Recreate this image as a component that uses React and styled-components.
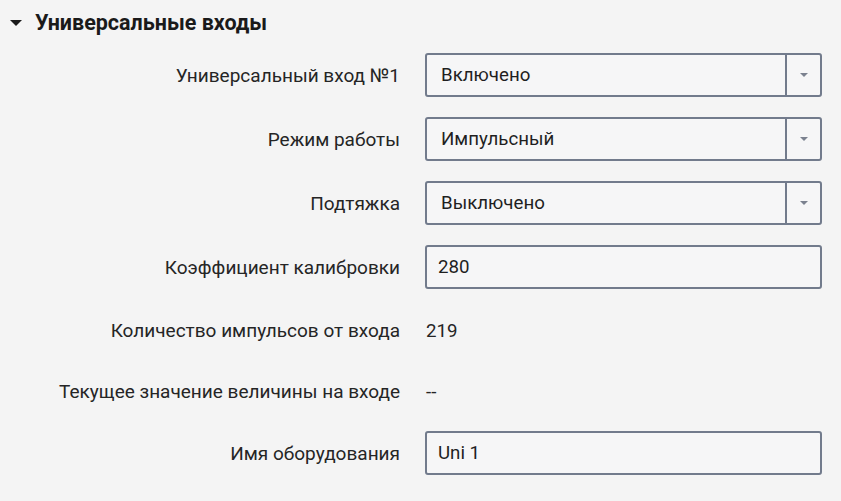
import styled, { createGlobalStyle } from 'styled-components';

const GlobalStyle = createGlobalStyle`
  body {
    margin: 0;
    background: #f4f4f4;
    font-family: Roboto, "Noto Sans", sans-serif;
    color: #212121;
  }
`;

const fields = [
  { label: 'Универсальный вход №1', type: 'select', value: 'Включено' },
  { label: 'Режим работы', type: 'select', value: 'Импульсный' },
  { label: 'Подтяжка', type: 'select', value: 'Выключено' },
  { label: 'Коэффициент калибровки', type: 'input', value: '280' },
  { label: 'Количество импульсов от входа', type: 'text', value: '219', h: 43 },
  { label: 'Текущее значение величины на входе', type: 'text', value: '--', h: 39 },
  { label: 'Имя оборудования', type: 'input', value: 'Uni 1' },
];

const Section = () => {
  return (
    <Container>
      <Header>
        <Caret viewBox='0 0 12 6'>
          <path d='M0 0 L12 0 L6 6 Z' fill='#1a1a1a' />
        </Caret>
        <h2>Универсальные входы</h2>
      </Header>
      <Form>
        {fields.map((f) => (
          <Row key={f.label} $h={f.h}>
            <Label>{f.label}</Label>
            {f.type === 'select' && (
              <Select>
                <span>{f.value}</span>
                <SelectButton>
                  <svg width='8' height='4' viewBox='0 0 8 4'>
                    <path d='M0 0 L8 0 L4 4 Z' fill='#7b818f' />
                  </svg>
                </SelectButton>
              </Select>
            )}
            {f.type === 'input' && <Input>{f.value}</Input>}
            {f.type === 'text' && <Value>{f.value}</Value>}
          </Row>
        ))}
      </Form>
    </Container>
  );
};

const Container = styled.div`
  width: 841px;
  height: 501px;
  overflow: hidden;
`;

const Header = styled.div`
  display: flex;
  align-items: center;
  height: 44px;
  padding-left: 10px;
  gap: 13px;

  h2 {
    margin: 0;
    font-size: 21.5px;
    font-weight: 700;
    color: #1a1a1a;
  }
`;

const Caret = styled.svg`
  width: 12px;
  height: 6px;
  margin-top: 1px;
`;

const Form = styled.div`
  display: flex;
  flex-direction: column;
  gap: 20px;
  margin-top: 9px;
`;

const Row = styled.div`
  display: grid;
  grid-template-columns: 400px 397px;
  column-gap: 25px;
  align-items: center;
  height: ${({ $h }) => ($h ? `${$h}px` : '44px')};
`;

const Label = styled.div`
  text-align: right;
  font-size: 19px;
  color: #252525;
`;

const boxStyle = `
  box-sizing: border-box;
  height: 44px;
  border: 2px solid #727b8c;
  border-radius: 3px;
  background: #f6f6f7;
  font-size: 18.7px;
  color: #1f1f1f;
`;

const Select = styled.div`
  ${boxStyle}
  display: flex;
  align-items: center;

  span {
    flex: 1;
    padding-left: 14px;
  }
`;

const SelectButton = styled.div`
  width: 33px;
  height: 100%;
  border-left: 2px solid #727b8c;
  display: flex;
  align-items: center;
  justify-content: center;
`;

const Input = styled.div`
  ${boxStyle}
  display: flex;
  align-items: center;
  padding-left: 11px;
`;

const Value = styled.div`
  font-size: 18.7px;
  color: #252525;
  padding-left: 1px;
`;

export default function App() {
  return (
    <>
      <GlobalStyle />
      <Section />
    </>
  );
}
